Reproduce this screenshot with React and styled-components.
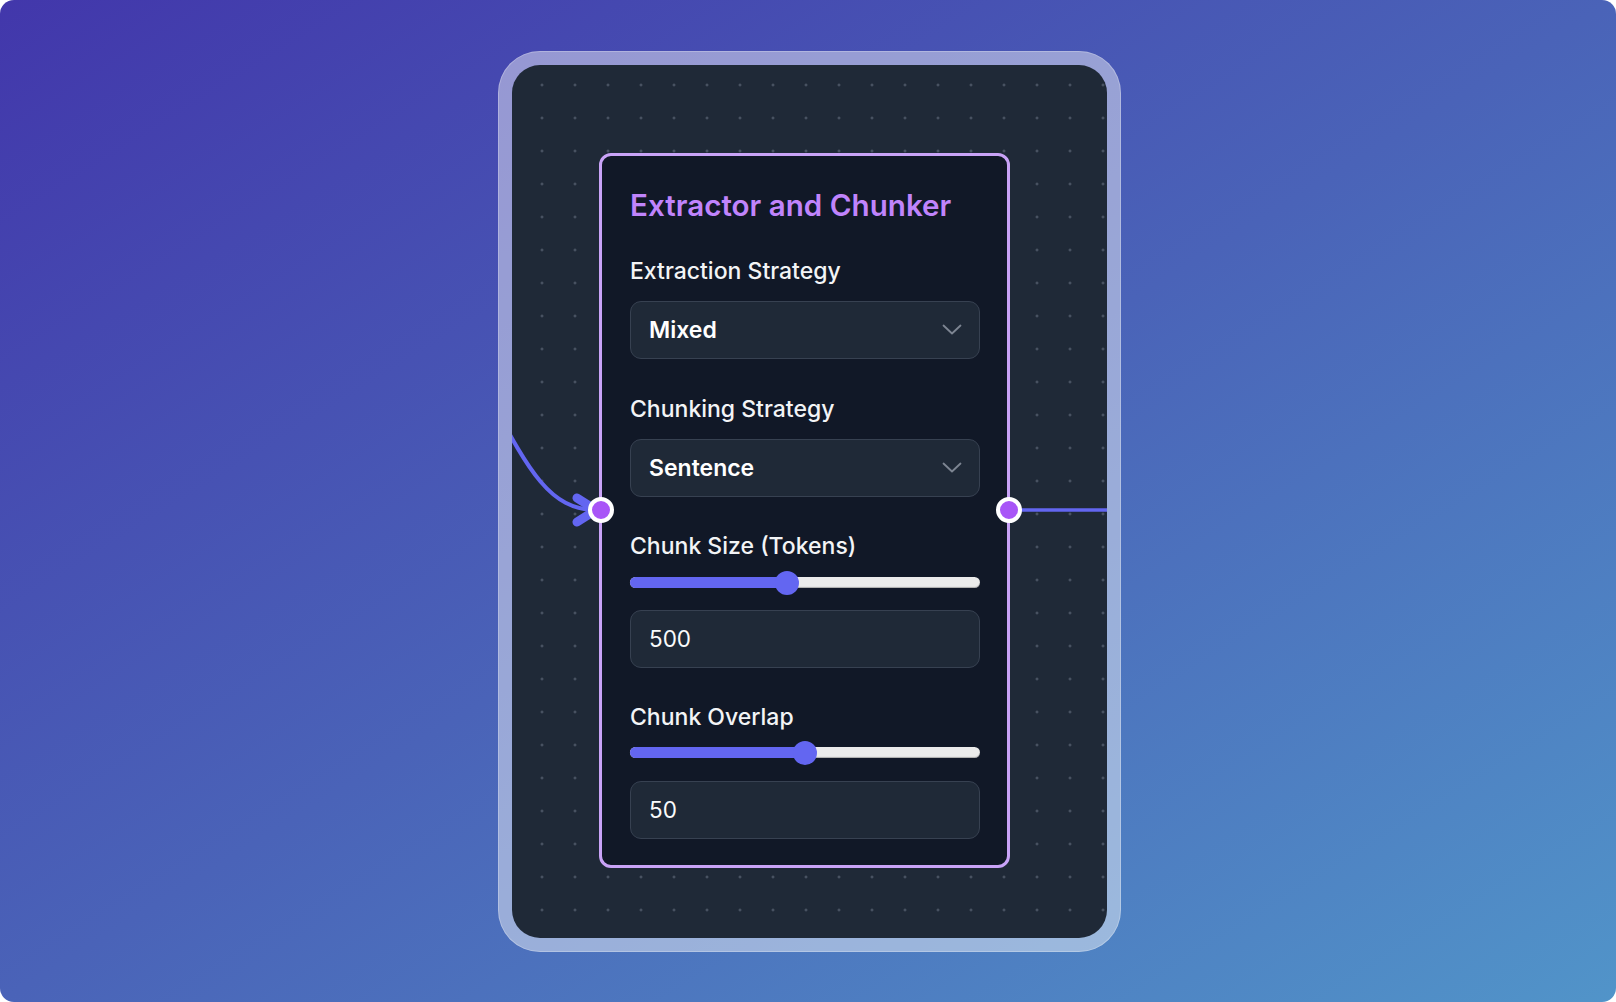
import React from "react";
import styled, { createGlobalStyle } from "styled-components";

const GlobalStyle = createGlobalStyle`
  html, body {
    margin: 0;
    padding: 0;
    background: #ffffff;
  }
  * {
    box-sizing: border-box;
  }
`;

const Page = styled.div`
  width: 100vw;
  height: 100vh;
  border-radius: 14px;
  overflow: hidden;
  display: flex;
  align-items: center;
  justify-content: center;
  padding-left: 2px;
  background: linear-gradient(to bottom right, #4237ab 0%, #4a63b8 50%, #5194c9 100%);
  font-family: Inter, "Noto Sans", "Liberation Sans", sans-serif;
`;

const Frame = styled.div`
  padding: 14px;
  border-radius: 42px;
  background: rgba(255, 255, 255, 0.44);
  box-shadow: inset 0 0 0 1px rgba(255, 255, 255, 0.25);
`;

const Canvas = styled.div`
  position: relative;
  width: 595px;
  height: 873px;
  border-radius: 28px;
  overflow: hidden;
  background-color: #1f2937;
  background-image: radial-gradient(circle, #5d6778 0.9px, transparent 1.4px);
  background-size: 33px 33px;
  background-position: 13.5px 3.5px;
`;

const EdgeLayer = styled.svg`
  position: absolute;
  inset: 0;
  width: 100%;
  height: 100%;
  overflow: visible;
`;

const Node = styled.div`
  position: absolute;
  left: 87.5px;
  top: 88px;
  width: 411px;
  border: 3px solid #c9a3f7;
  border-radius: 12px;
  background: #111827;
  padding: 28px 27px 26px 28px;
  display: flex;
  flex-direction: column;
`;

const Handle = styled.div`
  position: absolute;
  top: 50%;
  ${(p) => (p.side === "left" ? "left: -1.5px;" : "right: -1.5px;")}
  transform: translate(${(p) => (p.side === "left" ? "-50%" : "50%")}, -50%);
  width: 26px;
  height: 26px;
  border-radius: 50%;
  background: #a855f7;
  border: 4px solid #ffffff;
`;

const Title = styled.h2`
  margin: 3px 0 0;
  font-size: 29.6px;
  line-height: 36px;
  font-weight: 600;
  color: #c084fc;
`;

const Section = styled.div`
  display: flex;
  flex-direction: column;
  margin-top: ${(p) => p.gap}px;
`;

const Label = styled.label`
  font-size: 23px;
  line-height: 28px;
  font-weight: 500;
  color: #f3f4f6;
`;

const Select = styled.div`
  margin-top: 16px;
  height: 58px;
  display: flex;
  align-items: center;
  justify-content: space-between;
  padding: 0 17px 0 18px;
  background: #1f2937;
  border: 1.5px solid #374151;
  border-radius: 11px;
  color: #ffffff;
  font-size: 23px;
  font-weight: 600;
`;

const Chevron = () => (
  <svg width="20" height="11" viewBox="0 0 20 11" fill="none">
    <path
      d="M1.5 1.5 L10 9.5 L18.5 1.5"
      stroke="#7d8592"
      strokeWidth="1.8"
      strokeLinecap="round"
      strokeLinejoin="round"
    />
  </svg>
);

const SliderBox = styled.div`
  position: relative;
  height: 24px;
  margin-top: ${(p) => p.gap}px;
  display: flex;
  align-items: center;
`;

const Track = styled.div`
  position: relative;
  width: 100%;
  height: 11px;
  border-radius: 6px;
  background: #ebebeb;
  box-shadow: inset 0 -1px 1px rgba(0, 0, 0, 0.28);
  overflow: hidden;
`;

const Fill = styled.div`
  position: absolute;
  left: 0;
  top: 0;
  bottom: 0;
  background: #6366f1;
`;

const Thumb = styled.div`
  position: absolute;
  top: 0;
  width: 24px;
  height: 24px;
  border-radius: 50%;
  background: #6366f1;
`;

const NumberInput = styled.input`
  margin-top: ${(p) => p.gap}px;
  width: 100%;
  height: 58px;
  padding: 0 18px;
  background: #1f2937;
  border: 1.5px solid #374151;
  border-radius: 11px;
  color: #f9fafb;
  font-family: inherit;
  font-size: 22.5px;
  font-weight: 400;
  outline: none;
`;

const SLIDER_WIDTH = 350;
const THUMB = 24;

const Slider = ({ value, min, max, gap }) => {
  const f = (value - min) / (max - min);
  const left = f * (SLIDER_WIDTH - THUMB);
  return (
    <SliderBox gap={gap}>
      <Track>
        <Fill style={{ width: left + THUMB / 2 }} />
      </Track>
      <Thumb style={{ left }} />
    </SliderBox>
  );
};

export default function App() {
  return (
    <>
      <GlobalStyle />
      <Page>
        <Frame>
          <Canvas>
            <EdgeLayer viewBox="0 0 595 873">
              <path
                d="M -40 300 C 10 390, 30 445, 84 445"
                stroke="#6366f1"
                strokeWidth="4"
                fill="none"
              />
              <polyline
                points="65,433 84,445 65,457"
                stroke="#6366f1"
                strokeWidth="9"
                fill="none"
                strokeLinecap="round"
                strokeLinejoin="round"
              />
              <line x1="495" y1="445" x2="600" y2="445" stroke="#6366f1" strokeWidth="3.5" />
            </EdgeLayer>
            <Node>
              <Handle side="left" />
              <Handle side="right" />
              <Title>Extractor and Chunker</Title>

              <Section gap={34}>
                <Label>Extraction Strategy</Label>
                <Select>
                  <span>Mixed</span>
                  <Chevron />
                </Select>
              </Section>

              <Section gap={36}>
                <Label>Chunking Strategy</Label>
                <Select>
                  <span>Sentence</span>
                  <Chevron />
                </Select>
              </Section>

              <Section gap={35}>
                <Label>Chunk Size (Tokens)</Label>
                <Slider value={500} min={100} max={1000} gap={11} />
                <NumberInput gap={15} defaultValue="500" />
              </Section>

              <Section gap={35}>
                <Label>Chunk Overlap</Label>
                <Slider value={50} min={0} max={100} gap={10} />
                <NumberInput gap={16} defaultValue="50" />
              </Section>
            </Node>
          </Canvas>
        </Frame>
      </Page>
    </>
  );
}
